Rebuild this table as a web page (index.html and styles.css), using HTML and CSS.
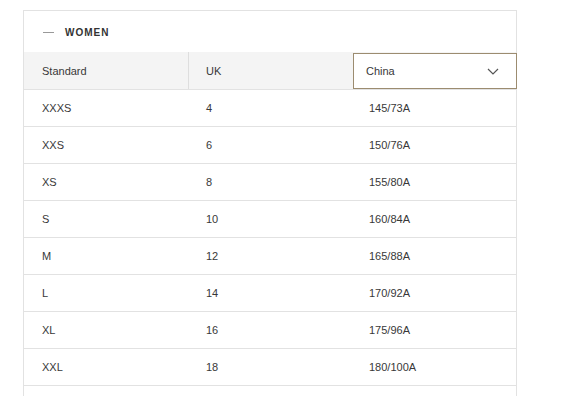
FILE: index.html
```html
<!DOCTYPE html>
<html>
<head>
<meta charset="utf-8">
<link rel="stylesheet" href="styles.css">
</head>
<body>
<div class="page">
  <div class="panel">
    <div class="panel-head">
      <span class="dash"></span>
      <span class="title">WOMEN</span>
    </div>
    <div class="table">
      <div class="row head">
        <div class="cell">Standard</div>
        <div class="cell divided">UK</div>
        <div class="cell select">
          <span>China</span>
          <svg class="chev" width="12" height="7" viewBox="0 0 12 7"><path d="M1 1l5 5 5-5" fill="none" stroke="#555" stroke-width="1.2"/></svg>
        </div>
      </div>
      <div class="row"><div class="cell">XXXS</div><div class="cell">4</div><div class="cell val">145/73A</div></div>
      <div class="row"><div class="cell">XXS</div><div class="cell">6</div><div class="cell val">150/76A</div></div>
      <div class="row"><div class="cell">XS</div><div class="cell">8</div><div class="cell val">155/80A</div></div>
      <div class="row"><div class="cell">S</div><div class="cell">10</div><div class="cell val">160/84A</div></div>
      <div class="row"><div class="cell">M</div><div class="cell">12</div><div class="cell val">165/88A</div></div>
      <div class="row"><div class="cell">L</div><div class="cell">14</div><div class="cell val">170/92A</div></div>
      <div class="row"><div class="cell">XL</div><div class="cell">16</div><div class="cell val">175/96A</div></div>
      <div class="row"><div class="cell">XXL</div><div class="cell">18</div><div class="cell val">180/100A</div></div>
      <div class="row"><div class="cell"></div><div class="cell"></div><div class="cell val"></div></div>
    </div>
  </div>
</div>
</body>
</html>
```
FILE: styles.css
```css
html, body {
  margin: 0;
  padding: 0;
  background: #fff;
  overflow: hidden;
}
.page {
  padding: 10px 0 0 23px;
  font-family: "Liberation Sans", Arial, sans-serif;
  color: #383838;
}
.panel {
  width: 492px;
  border: 1px solid #e2e2e2;
}
.panel-head {
  height: 40px;
  padding-top: 1px;
  display: flex;
  align-items: center;
  padding-left: 19px;
}
.dash {
  width: 11px;
  height: 1px;
  background: #999;
  margin-right: 11px;
}
.title {
  font-size: 10px;
  font-weight: bold;
  letter-spacing: 1px;
  color: #333;
}
.row {
  display: grid;
  grid-template-columns: 164px 165px 163px;
  height: 36px;
  border-bottom: 1px solid #e2e2e2;
  font-size: 11px;
}
.row.head {
  height: 37px;
  background: #f4f4f4;
}
.cell {
  display: flex;
  align-items: center;
  padding-left: 18px;
}
.cell.divided {
  border-left: 1px solid #dedede;
  padding-left: 17px;
}
.cell.val {
  padding-left: 16px;
}
.cell.select {
  margin: 1px -1px 0 0;
  background: #fff;
  border: 1px solid #9c8c70;
  padding-left: 12px;
  padding-right: 17px;
  justify-content: space-between;
}
.chev {
  display: block;
}
```
